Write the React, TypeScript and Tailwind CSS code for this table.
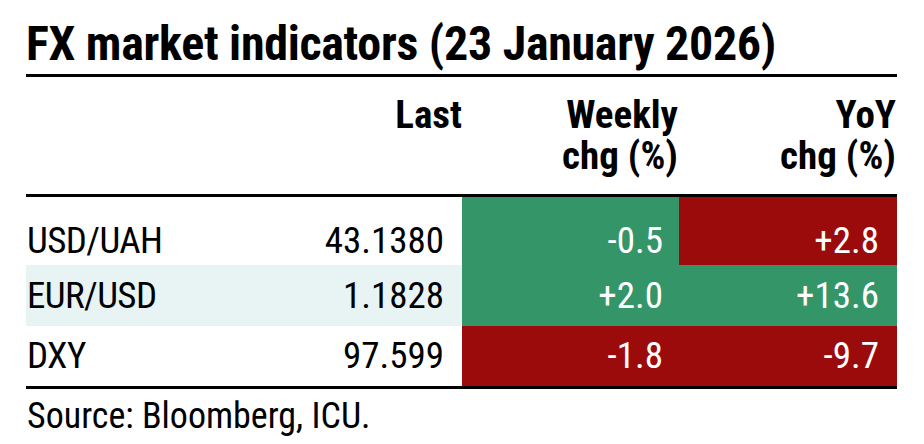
import React from 'react';

type Cell = { value: string; tone: 'green' | 'red' };

const rows: { pair: string; last: string; weekly: Cell; yoy: Cell; shaded?: boolean; first?: boolean }[] = [
  { pair: 'USD/UAH', last: '43.1380', weekly: { value: '-0.5', tone: 'green' }, yoy: { value: '+2.8', tone: 'red' }, first: true },
  { pair: 'EUR/USD', last: '1.1828', weekly: { value: '+2.0', tone: 'green' }, yoy: { value: '+13.6', tone: 'green' }, shaded: true },
  { pair: 'DXY', last: '97.599', weekly: { value: '-1.8', tone: 'red' }, yoy: { value: '-9.7', tone: 'red' } },
];

const toneClass = {
  green: 'bg-[#349668] text-white',
  red: 'bg-[#9b0b0b] text-white',
};

export default function App() {
  return (
    <div className="w-[924px] h-[444px] bg-white pl-[26px] font-['Roboto_Condensed',Roboto,sans-serif] font-stretch-condensed text-black">
      <div className="w-[871px]">
        <h1 className="pt-[20px] pb-[6px] text-[48px] leading-[48px] font-bold tracking-[-0.3px] border-b-[3px] border-black">
          FX market indicators (23 January 2026)
        </h1>

        <div className="grid grid-cols-[210px_226px_217px_218px] pt-[18px] pb-[17px] border-b-[3px] border-black text-[39px] leading-[41px] font-bold">
          <div />
          <div className="text-right">Last</div>
          <div className="text-right pr-px">
            Weekly
            <br />
            chg (%)
          </div>
          <div className="text-right pr-px">
            YoY
            <br />
            chg (%)
          </div>
        </div>

        <div className="border-b-[3px] border-black text-[37px] leading-[44px] font-normal">
          {rows.map((r) => {
            const h = r.first ? 'h-[68px] pt-[20px]' : r.shaded ? 'h-[61px]' : 'h-[60px]';
            const shade = r.shaded ? 'bg-[#e8f4f4]' : '';
            return (
              <div key={r.pair} className="grid grid-cols-[210px_226px_217px_218px]">
                <div className={`flex items-center pl-px tracking-[-0.6px] ${h} ${shade}`}>{r.pair}</div>
                <div className={`flex items-center justify-end pr-[18px] ${h} ${shade}`}>{r.last}</div>
                <div className={`flex items-center justify-end pr-[16px] ${h} ${toneClass[r.weekly.tone]}`}>
                  {r.weekly.value}
                </div>
                <div className={`flex items-center justify-end pr-[18px] ${h} ${toneClass[r.yoy.tone]}`}>
                  {r.yoy.value}
                </div>
              </div>
            );
          })}
        </div>

        <p className="mt-[7px] pl-px text-[36px] leading-[40px]">Source: Bloomberg, ICU.</p>
      </div>
    </div>
  );
}
